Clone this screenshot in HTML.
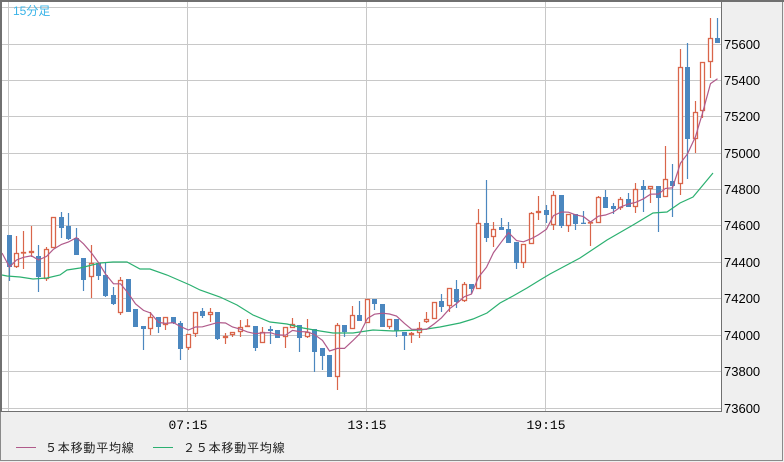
<!DOCTYPE html>
<html><head><meta charset="utf-8"><style>
body{margin:0;width:784px;height:462px;overflow:hidden;background:#efefef;font-family:"Liberation Sans","Noto Sans CJK JP",sans-serif}
svg{position:absolute;left:0;top:0}
</style></head><body>
<svg id="c" width="784" height="462" xmlns="http://www.w3.org/2000/svg">
<rect x="0" y="0" width="784" height="462" fill="#efefef"/>
<rect x="0.5" y="0.5" width="782" height="460" fill="none" stroke="#8a8a8a"/>
<rect x="1" y="1" width="720" height="410" fill="#fff"/>
<g id="grid" stroke="#c8c8c8" stroke-width="1"></g>
<g id="cd"></g>
<polyline id="g25" fill="none" stroke="#2bb070" stroke-width="1.2"/>
<polyline id="m5" fill="none" stroke="#b05a8a" stroke-width="1.2"/>
<line x1="0" y1="1" x2="784" y2="1" stroke="#707070" stroke-width="2"/>
<line x1="1" y1="0" x2="1" y2="412" stroke="#707070" stroke-width="2"/>
<line x1="721.5" y1="1" x2="721.5" y2="412" stroke="#707070"/>
<line x1="1" y1="411.5" x2="722" y2="411.5" stroke="#707070"/>
<text x="13" y="15" font-size="12" fill="#3ab4e8">15分足</text>
<g font-size="13" fill="#000" font-family="Liberation Sans,sans-serif">
<text x="724" y="49">75600</text><text x="724" y="85">75400</text><text x="724" y="121">75200</text>
<text x="724" y="158">75000</text><text x="724" y="194">74800</text><text x="724" y="230">74600</text>
<text x="724" y="267">74400</text><text x="724" y="303">74200</text><text x="724" y="340">74000</text>
<text x="724" y="376">73800</text><text x="724" y="413">73600</text>
</g>
<g font-size="13" fill="#000" font-family="Liberation Mono,monospace" text-anchor="middle">
<text x="188" y="429">07:15</text><text x="367" y="429">13:15</text><text x="546" y="429">19:15</text>
</g>
<line x1="16" y1="447.5" x2="36" y2="447.5" stroke="#b05a8a"/>
<line x1="153" y1="447.5" x2="173" y2="447.5" stroke="#2bb070"/>
<g font-size="12" fill="#222" letter-spacing="0.8">
<text x="45" y="452">５本移動平均線</text>
<text x="183" y="452">２５本移動平均線</text>
</g>
</svg>
<script>
var ns="http://www.w3.org/2000/svg";
function el(p,t,a){var e=document.createElementNS(ns,t);for(var k in a)e.setAttribute(k,a[k]);p.appendChild(e);return e;}
var g=document.getElementById('grid');
[7,44,80,116,153,189,225,262,298,335,371,408].forEach(function(y){el(g,'line',{x1:2,x2:721,y1:y+.5,y2:y+.5});});
[8,187,366,545].forEach(function(x){el(g,'line',{x1:x+.5,x2:x+.5,y1:2,y2:411});});
var D=[
['b',235,267,235,281],['r',253,267,236,268],['r',252,253,231,269],['r',251,253,226,257],['b',256,277,245,292],
['r',249,279,247,281],['r',217,248,217,248],['b',217,228,212,238],['b',226,239,213,240],['b',238,255,228,255],
['b',258,280,258,291],['r',263,277,245,298],['b',263,276,263,280],['b',275,296,263,297],['b',295,304,287,305],
['r',280,313,277,315],['b',279,312,279,312],['b',309,327,309,327],['b',326,329,326,350],['r',317,329,312,335],
['b',317,327,317,333],['r',317,325,317,330],['b',317,323,317,324],['b',323,349,321,360],['r',334,348,334,350],
['r',312,334,312,337],['b',311,316,308,318],['r',312,315,308,322],['b',312,339,312,340],['r',336,338,333,344],
['r',332,335,332,337],['r',327,332,320,337],['r',325.5,327,319,327],['b',326,348,326,351],['r',332,343,327,343],
['b',329,331,326,344],['b',330,338,330,338],['r',327,337,327,348],['r',324,328,318,328],['b',325,338,325,352],
['r',332,337,319,338],['b',329,352,329,372],['b',348,356,348,370],['b',355,377,355,377],['r',325,377,323,390],
['b',325,332,325,337],['r',315,329,306,329],['b',315,321,301,321],['r',299,323,299,323],['b',299,304,299,310],
['b',304,327,304,327],['r',319,327,319,329],['b',319,331,319,337],['b',332,336,332,350],['r',333,335,332,343],
['r',328,333,322,338],['r',319,322,312,323],['r',302,319,302,319],['b',301,307,294,312],['r',288,306,288,312],
['b',289,302,280,308],['r',284,301,282,302],['b',284,289,284,294],['r',223,289,209,289],['b',223,238,180,242],
['r',229,237,222,247],['b',227,230,218,230],['b',229,243,222,243],['b',242,263,242,269],['r',244,263,244,268],
['r',213,244,212,244],['r',211,213,196,220],['b',210,215,205,223],['r',195,225,191,230],['b',195,226,195,228],
['r',214,226,214,232],['b',214,224,214,230],['b',222.7,224,211,224],['r',222,223,222,246],['r',197,223,196,223],
['b',197,208,190,208],['b',206,209,203,214],['r',199,208,197,210],['b',199,207,193,207],['r',189,207,183,213],
['b',186,190,180,212],['r',186,189,186,203],['b',186,198,186,232],['r',179,197,146,197],['b',181,186,164,217],
['r',67,184,49,195],['b',67,139,43,179],['r',112,139,101,153],['r',62,111,62,118],['r',38,62,18,78],['b',38,43,18,43]];
var cd=document.getElementById('cd'),closes=[],xs=[];
D.forEach(function(d,i){
 var x=Math.round(8.5+7.46*i)+.5, blue=d[0]=='b', col=blue?'#4b87bf':'#d9654a';
 xs.push(x); closes.push(blue?d[2]:d[1]);
 el(cd,'line',{x1:x,x2:x,y1:d[3],y2:d[4],stroke:col,'stroke-width':1.2});
 var h=Math.max(1,d[2]-d[1]);
 if(blue) el(cd,'rect',{x:x-2.5,y:d[1],width:5,height:h,fill:col});
 else { el(cd,'rect',{x:x-2,y:d[1]+.5,width:4,height:Math.max(0.5,h-1),fill:'#fff',stroke:col,'stroke-width':1.3}); }
});
var pts=[];
for(var i=0;i<closes.length;i++){var s=0,n=0;for(var j=Math.max(0,i-4);j<=i;j++){s+=closes[j];n++;}pts.push(xs[i]+','+(s/n).toFixed(1));}
pts[0]='2,253 '+pts[0];
document.getElementById('m5').setAttribute('points',pts.join(' '));
document.getElementById('g25').setAttribute('points','2,275 7,276 20,277 33,279 47,278 60,275 67,270 80,268 100,263 113,262 127,262 140,269 150,269 167,275 190,285 200,290 220,297 237,305 253,315 270,322 287,324 303,328 320,331 333,333 353,333 373,330 393,331 420,330 440,327 460,323 473,319 487,313 500,303 513,296 527,288 540,280 550,274 580,258 607,240 633,225 653,213 667,212 680,203 693,197 713,173');
</script>
</body></html>
